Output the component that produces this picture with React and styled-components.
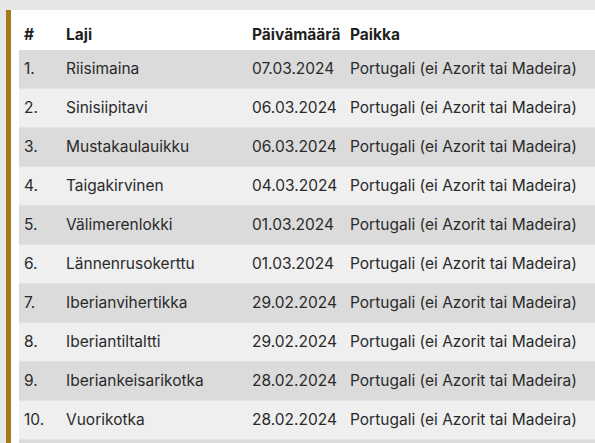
import React from "react";
import { styled, createGlobalStyle } from "styled-components";

const GlobalStyle = createGlobalStyle`
  html, body {
    margin: 0;
    padding: 0;
    background: #e6e6e6;
    overflow: hidden;
  }
  body {
    font-family: Inter, "Noto Sans", sans-serif;
    color: #222;
  }
`;

const Page = styled.div`
  padding: 10px 0 0 6px;
`;

const Card = styled.div`
  background: #fff;
  border-left: 5px solid #a57a1d;
  padding: 8px 0 0 8px;
`;

const Table = styled.table`
  width: 100%;
  border-collapse: collapse;
  table-layout: fixed;
  font-size: 15.5px;
`;

const Th = styled.th`
  box-sizing: border-box;
  width: ${(p) => p.$w || "auto"};
  text-align: left;
  font-weight: 700;
  height: 32px;
  padding: 0 5px;
  white-space: nowrap;
  color: #1f1f1f;
`;

const Tr = styled.tr`
  background: ${(p) => (p.$odd ? "#dbdbdb" : "#efefef")};
  border-bottom: 1px solid #e3e3e3;
`;

const Td = styled.td`
  padding: 7px 5px;
  line-height: 24px;
  white-space: nowrap;
  color: #2a2a2a;
`;

const rows = [
  ["Riisimaina", "07.03.2024"],
  ["Sinisiipitavi", "06.03.2024"],
  ["Mustakaulauikku", "06.03.2024"],
  ["Taigakirvinen", "04.03.2024"],
  ["Välimerenlokki", "01.03.2024"],
  ["Lännenrusokerttu", "01.03.2024"],
  ["Iberianvihertikka", "29.02.2024"],
  ["Iberiantiltaltti", "29.02.2024"],
  ["Iberiankeisarikotka", "28.02.2024"],
  ["Vuorikotka", "28.02.2024"],
  ["Kalliokiipijä", "27.02.2024"],
];

const App = () => {
  return (
    <Page>
      <GlobalStyle />
      <Card>
        <Table>
          <thead>
            <tr>
              <Th $w="42px">#</Th>
              <Th $w="186px">Laji</Th>
              <Th $w="98px">Päivämäärä</Th>
              <Th>Paikka</Th>
            </tr>
          </thead>
          <tbody>
            {rows.map(([name, date], i) => (
              <Tr key={name} $odd={i % 2 === 0}>
                <Td>{i + 1}.</Td>
                <Td>{name}</Td>
                <Td>{date}</Td>
                <Td>Portugali (ei Azorit tai Madeira)</Td>
              </Tr>
            ))}
          </tbody>
        </Table>
      </Card>
    </Page>
  );
};

export default App;
